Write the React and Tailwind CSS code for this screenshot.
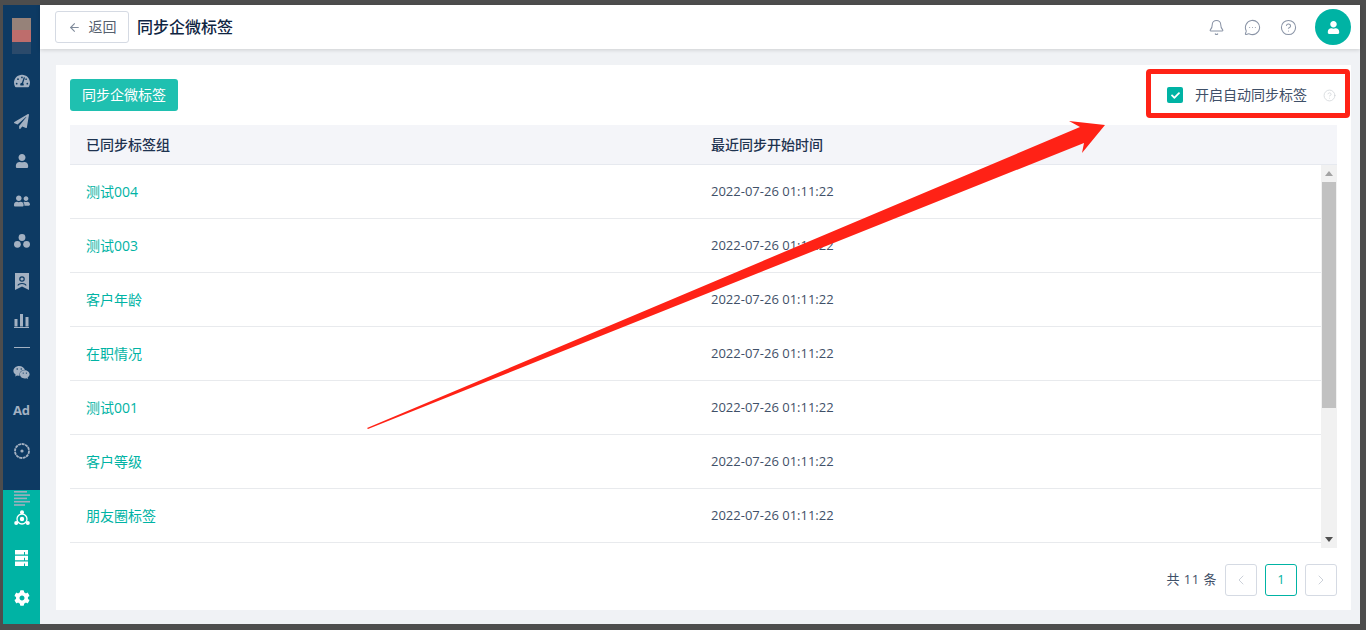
import React from "react";
import { ArrowLeft, Bell, ChevronLeft, ChevronRight, CircleHelp, MessageCircleMore } from "lucide-react";
import { FaCheck, FaCog, FaPaperPlane, FaTachometerAlt, FaUser, FaUserFriends, FaWeixin } from "react-icons/fa";

const filas = [
  "测试004",
  "测试003",
  "客户年龄",
  "在职情况",
  "测试001",
  "客户等级",
  "朋友圈标签"
];

function IconoMenu({ children }) {
  return <div className="h-10 flex items-center justify-center">{children}</div>;
}

function Tres() {
  return (
    <svg width="16" height="14" viewBox="0 0 16 14" fill="currentColor">
      <circle cx="8" cy="3.5" r="3.4" />
      <circle cx="3.4" cy="10.3" r="3.4" />
      <circle cx="12.6" cy="10.3" r="3.4" />
    </svg>
  );
}

function Marcador() {
  return (
    <svg width="14" height="17" viewBox="0 0 14 17">
      <path d="M0 0H14V17L7 13.5L0 17Z" fill="currentColor" />
      <circle cx="7" cy="6" r="2.2" fill="none" stroke="#0d3a63" strokeWidth="1.2" />
      <path d="M3 12.5C3.5 9.8 10.5 9.8 11 12.5" fill="none" stroke="#0d3a63" strokeWidth="1.2" />
    </svg>
  );
}

function Barras() {
  return (
    <svg width="15" height="14" viewBox="0 0 15 14" fill="currentColor">
      <rect x="0.5" y="5" width="3" height="7.5" />
      <rect x="6" y="0" width="3" height="12.5" />
      <rect x="11.5" y="3" width="3" height="9.5" />
      <rect x="0" y="13" width="15" height="1" />
    </svg>
  );
}

function Disco() {
  return (
    <svg width="16" height="16" viewBox="0 0 16 16" fill="none" stroke="currentColor">
      <circle cx="8" cy="8" r="7" strokeWidth="1.8" strokeDasharray="3 0.6" />
      <circle cx="8" cy="8" r="1.6" fill="currentColor" stroke="none" />
    </svg>
  );
}

function Lista() {
  return (
    <svg width="16" height="15" viewBox="0 0 16 15" fill="#9fb0bd">
      <rect x="0" y="0" width="13" height="1.6" />
      <rect x="0" y="3.3" width="16" height="1.6" />
      <rect x="0" y="6.6" width="13" height="1.6" />
      <rect x="0" y="9.9" width="16" height="1.6" />
      <rect x="0" y="13.2" width="11" height="1.6" />
    </svg>
  );
}

function Nodos() {
  return (
    <svg width="16" height="16" viewBox="0 0 16 16" fill="none" stroke="white" strokeWidth="1.3">
      <circle cx="8" cy="9" r="5" />
      <circle cx="8" cy="9" r="2.2" fill="white" stroke="none" />
      <circle cx="8" cy="2.2" r="2" fill="white" stroke="none" />
      <circle cx="2.2" cy="13" r="2" fill="white" stroke="none" />
      <circle cx="13.8" cy="13" r="2" fill="white" stroke="none" />
    </svg>
  );
}

function Servidor() {
  return (
    <svg width="13" height="16" viewBox="0 0 13 16" fill="white">
      <path d="M0 0H13V4.4H10V2H9V4.4H0Z" />
      <path d="M0 5.8H13V10.2H10V7.8H9V10.2H0Z" />
      <path d="M0 11.6H13V16H10V13.6H9V16H0Z" />
    </svg>
  );
}

function Sidebar() {
  return (
    <aside className="w-[37px] shrink-0 flex flex-col">
      <div className="h-[485px] bg-[#0d3a63] text-[#a3b1c2] flex flex-col">
        <div className="h-[56px] pt-[13px] pl-[9px]">
          <div className="w-[19px] h-[36px] flex flex-col opacity-90">
            <div className="h-[12px] bg-[#a58a7c]"></div>
            <div className="h-[12px] bg-[#d2736d]"></div>
            <div className="h-[12px] bg-[#2f4c6c]"></div>
          </div>
        </div>
        <IconoMenu><FaTachometerAlt size={16} /></IconoMenu>
        <IconoMenu><FaPaperPlane size={15} /></IconoMenu>
        <IconoMenu><FaUser size={14} /></IconoMenu>
        <IconoMenu><FaUserFriends size={16} /></IconoMenu>
        <IconoMenu><Tres /></IconoMenu>
        <IconoMenu><Marcador /></IconoMenu>
        <IconoMenu><Barras /></IconoMenu>
        <div className="h-[12px] flex items-center justify-center">
          <div className="w-4 h-px bg-[#a3b1c2]"></div>
        </div>
        <div className="h-[38px] flex items-center justify-center"><FaWeixin size={17} /></div>
        <IconoMenu><span className="font-bold text-[13px]">Ad</span></IconoMenu>
        <IconoMenu><Disco /></IconoMenu>
      </div>
      <div className="flex-1 bg-[#00b3a4] flex flex-col">
        <div className="h-[8px] pt-px flex justify-center overflow-visible"><Lista /></div>
        <IconoMenu><Nodos /></IconoMenu>
        <IconoMenu><Servidor /></IconoMenu>
        <IconoMenu><FaCog size={16} color="white" /></IconoMenu>
      </div>
    </aside>
  );
}

function Header() {
  return (
    <header className="h-11 shrink-0 bg-white shadow-[0_1px_4px_rgba(0,0,0,0.15)] flex items-center justify-between pl-[15px] pr-[9px] relative">
      <div className="flex items-center">
        <button className="w-[74px] h-8 rounded-[3px] border border-[#d5dae3] flex items-center justify-center gap-2 text-sm text-[#55606e]">
          <ArrowLeft size={13} className="text-[#7f8a9a]" />
          返回
        </button>
        <h1 className="ml-2 text-base font-medium text-[#0f2542]">同步企微标签</h1>
      </div>
      <div className="flex items-center text-[#8a94a6]">
        <Bell size={17} strokeWidth={1.5} />
        <MessageCircleMore size={17} strokeWidth={1.5} className="ml-[19px]" />
        <CircleHelp size={17} strokeWidth={1.5} className="ml-[19px]" />
        <div className="ml-[18px] w-9 h-9 rounded-full bg-[#00b3a4] flex items-center justify-center">
          <FaUser size={13} color="white" />
        </div>
      </div>
    </header>
  );
}

function Scrollbar() {
  return (
    <div className="w-4 h-full bg-[#f1f1f1] flex flex-col items-center shrink-0">
      <div className="h-[17px] flex items-center justify-center">
        <div className="w-0 h-0 border-x-4 border-x-transparent border-b-[5px] border-b-[#a3a3a3]"></div>
      </div>
      <div className="w-[14px] h-[226px] bg-[#c1c1c1]"></div>
      <div className="flex-1"></div>
      <div className="h-[17px] flex items-center justify-center">
        <div className="w-0 h-0 border-x-4 border-x-transparent border-t-[5px] border-t-[#505050]"></div>
      </div>
    </div>
  );
}

function App() {
  return (
    <div className="relative w-[1366px] h-[630px] overflow-hidden bg-[#4d4d4d] pt-[5px] pl-[3px] pr-[6px] pb-[6px] font-['Open_Sans','Noto_Sans_CJK_SC',sans-serif]">
      <div className="h-full flex bg-[#f0f2f5]">
        <Sidebar />
        <main className="flex-1 flex flex-col min-w-0">
          <Header />
          <div className="flex-1 pt-4 pl-4 pr-[9px] pb-[14px]">
            <div className="h-full bg-white pt-[14px] px-[14px] flex flex-col">
              <div className="flex items-center justify-between h-8">
                <button className="w-[108px] h-8 rounded-[3px] bg-[#1fc0b0] text-white text-sm">同步企微标签</button>
                <label className="flex items-center text-sm text-[#3f5068] mr-px">
                  <span className="w-4 h-4 rounded-[2px] bg-[#00b3a4] flex items-center justify-center">
                    <FaCheck size={9} color="white" />
                  </span>
                  <span className="ml-3">开启自动同步标签</span>
                  <CircleHelp size={13} strokeWidth={1.4} className="ml-[16px] text-[#d0d3d8]" />
                </label>
              </div>
              <div className="mt-[14px] h-10 bg-[#f4f5f9] border-b border-[#e6e9ef] flex items-center text-sm font-medium text-[#1e3350]">
                <div className="w-[625px] pl-4">已同步标签组</div>
                <div className="pl-4">最近同步开始时间</div>
              </div>
              <div className="h-[383px] flex overflow-hidden">
                <div className="flex-1">
                  {filas.map(function (fila) {
                    return (
                      <div key={fila} className="h-[54px] border-b border-[#e8eaed] flex items-center text-sm">
                        <div className="w-[625px] pl-4 text-[#00b3a4]">{fila}</div>
                        <div className="pl-4 text-[13px] text-[#3f5068]">2022-07-26 01:11:22</div>
                      </div>
                    );
                  })}
                </div>
                <Scrollbar />
              </div>
              <div className="mt-4 flex items-center justify-end text-[13px] text-[#3f5068]">
                <span className="tracking-[0.5px]">共 11 条</span>
                <button className="ml-2 w-8 h-8 rounded-[3px] border border-[#d5dae3] flex items-center justify-center text-[#c8cdd6]">
                  <ChevronLeft size={16} strokeWidth={1.4} />
                </button>
                <button className="ml-2 w-8 h-8 rounded-[3px] border border-[#00b3a4] text-[#00b3a4] flex items-center justify-center">1</button>
                <button className="ml-2 w-8 h-8 rounded-[3px] border border-[#d5dae3] flex items-center justify-center text-[#c8cdd6]">
                  <ChevronRight size={16} strokeWidth={1.4} />
                </button>
              </div>
            </div>
          </div>
        </main>
      </div>

      {/* anotaciones encima de la captura */}
      <div className="absolute left-[1146px] top-[69px] w-[204px] h-[49px] rounded-[4px] border-[5px] border-[#ff2216]"></div>
      <svg className="absolute left-0 top-0 pointer-events-none" width="1366" height="630">
        <polygon points="367,428 1080,127 1069,121 1105,125 1082,153 1084,143 368,429" fill="#ff2216" />
      </svg>
    </div>
  );
}

export default App;
